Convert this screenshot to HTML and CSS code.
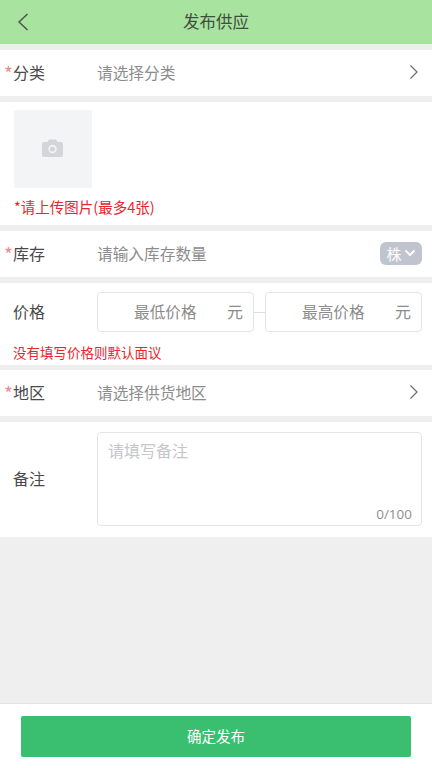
FILE: index.html
```html
<!DOCTYPE html>
<html>
<head>
	<meta charset="utf-8">
	<meta content="width=device-width, initial-scale=1.0" name="viewport">
	<title>发布供应</title>
	<link rel="stylesheet" href="styles.css">
</head>
<body>
	<div class="page">
		<div class="hd">
			<svg class="back" width="12" height="18" viewBox="0 0 12 18"><path d="M10.5 1 L2 9 L10.5 17" fill="none" stroke="#4a5a48" stroke-width="1.5"/></svg>
			<div class="hd-title">发布供应</div>
		</div>
		<div class="main">
			<div class="row">
				<div class="label"><span class="star">*</span>分类</div>
				<div class="val">请选择分类</div>
				<svg class="arrow" width="10" height="16" viewBox="0 0 10 16"><path d="M1.5 1.5 L8 8 L1.5 14.500" fill="none" stroke="#707070" stroke-width="1.300"/></svg>
			</div>
			<div class="upload">
				<div class="pic">
					<svg width="21" height="18" viewBox="0 0 21 18"><path d="M7 0.500 H14 L15.500 3 H19 Q21 3 21 5 V16 Q21 18 19 18 H2 Q0 18 0 16 V5 Q0 3 2 3 H5.500 Z" fill="#d4d5d8"/><circle cx="10.500" cy="10" r="4.200" fill="#f3f4f6"/><circle cx="10.500" cy="10" r="2.600" fill="#d4d5d8"/></svg>
				</div>
				<p class="tip tip-up">*请上传图片(最多4张)</p>
			</div>
			<div class="row">
				<div class="label"><span class="star">*</span>库存</div>
				<div class="val">请输入库存数量</div>
				<div class="unit">株<svg width="12" height="8" viewBox="0 0 12 8"><path d="M1.500 1.500 L6 6 L10.500 1.500" fill="none" stroke="#fff" stroke-width="2"/></svg></div>
			</div>
			<div class="price">
				<div class="price-line">
					<div class="label">价格</div>
					<div class="range">
						<div class="box"><span class="box-ph">最低价格</span><span class="yuan">元</span></div>
						<div class="dash"></div>
						<div class="box"><span class="box-ph">最高价格</span><span class="yuan">元</span></div>
					</div>
				</div>
				<p class="tip">没有填写价格则默认面议</p>
			</div>
			<div class="row">
				<div class="label"><span class="star">*</span>地区</div>
				<div class="val">请选择供货地区</div>
				<svg class="arrow" width="10" height="16" viewBox="0 0 10 16"><path d="M1.5 1.5 L8 8 L1.5 14.500" fill="none" stroke="#707070" stroke-width="1.300"/></svg>
			</div>
			<div class="remark">
				<div class="label">备注</div>
				<div class="area">
					<div class="area-ph">请填写备注</div>
					<div class="count">0/100</div>
				</div>
			</div>
		</div>
		<div class="ft">
			<div class="btn">确定发布</div>
		</div>
	</div>
</body>
</html>
```
FILE: styles.css
```css
* {
	box-sizing: border-box;
}
html, body {
	height: 100%;
}
body {
	margin: 0;
	font-family: "Noto Sans CJK SC", "Liberation Sans", sans-serif;
	font-size: 16px;
	color: #4a4a4a;
	background-color: #efefef;
}
p {
	margin: 0;
}
.page {
	height: 768px;
	display: flex;
	flex-direction: column;
}
.hd {
	height: 44px;
	flex: none;
	display: flex;
	align-items: center;
	justify-content: center;
	position: relative;
	padding-bottom: 2px;
	font-size: 16.500px;
	background-color: #a9e3a0;
	color: #3f4f3e;
}
.back {
	position: absolute;
	left: 17px;
	top: 13px;
}
.main {
	flex: 1;
	padding-top: 6px;
	display: flex;
	flex-direction: column;
	gap: 6px;
}
.row {
	height: 46px;
	display: flex;
	align-items: center;
	padding: 0 13px 2px 0;
	background-color: #fff;
}
.label {
	width: 97px;
	flex: none;
	padding-left: 13px;
	position: relative;
}
.star {
	position: absolute;
	left: 4px;
	top: 1px;
	font-size: 19px;
	line-height: 24px;
	color: #e98d91;
}
.val {
	flex: 1;
	font-size: 15.700px;
	color: #8c8c8c;
}
.upload {
	height: 123px;
	padding: 8px 14px 0;
	background-color: #fff;
}
.pic {
	width: 78px;
	height: 78px;
	display: flex;
	align-items: center;
	justify-content: center;
	padding: 0 2px 2px 0;
	border-radius: 2px;
	background-color: #f3f4f6;
}
.tip {
	font-size: 13.500px;
	line-height: 20px;
	color: #e8262c;
	padding-left: 13px;
}
.tip-up {
	padding-left: 0;
	margin-top: 9px;
	font-size: 14.500px;
}
.unit {
	width: 42px;
	height: 23px;
	margin-right: -3px;
	border-radius: 6px;
	display: flex;
	align-items: center;
	justify-content: center;
	gap: 2px;
	font-size: 15px;
	color: #fff;
	background-color: #c0c4cf;
}
.price {
	height: 82px;
	margin-bottom: -1px;
	padding-top: 9px;
	background-color: #fff;
}
.price-line {
	display: flex;
	align-items: center;
	margin-bottom: 10px;
}
.price-line .label {
	padding-bottom: 2px;
}
.range {
	flex: 1;
	display: flex;
	align-items: center;
	padding-right: 10px;
}
.box {
	width: 157px;
	height: 40px;
	display: flex;
	align-items: center;
	justify-content: space-between;
	padding: 0 10px 2px 36px;
	border: 1px solid #e3e4e6;
	border-radius: 4px;
}
.box + .dash + .box {
	margin-left: auto;
}
.box-ph {
	font-size: 15.700px;
	color: #8c8c8c;
}
.yuan {
	color: #8c8c8c;
}
.dash {
	width: 11px;
	height: 1px;
	background-color: #dcdde0;
}
.remark {
	height: 115px;
	display: flex;
	align-items: center;
	padding-right: 10px;
	background-color: #fff;
}
.remark .label {
	padding-bottom: 4px;
}
.area {
	flex: 1;
	height: 94px;
	margin-bottom: 1px;
	position: relative;
	padding: 5px 10px;
	border: 1px solid #e3e4e6;
	border-radius: 4px;
}
.area-ph {
	color: #c4c6cb;
}
.count {
	position: absolute;
	right: 9px;
	bottom: 2px;
	font-family: "Open Sans", "Liberation Sans", sans-serif;
	font-size: 13.500px;
	color: #8e8e8e;
}
.ft {
	height: 65px;
	flex: none;
	padding: 12px 21px 0;
	border-top: 1px solid #e4e4e4;
	background-color: #fff;
}
.btn {
	height: 41px;
	display: flex;
	align-items: center;
	justify-content: center;
	padding-bottom: 2px;
	border-radius: 2px;
	font-size: 14.500px;
	color: #fff;
	background-color: #3abf71;
}
```
